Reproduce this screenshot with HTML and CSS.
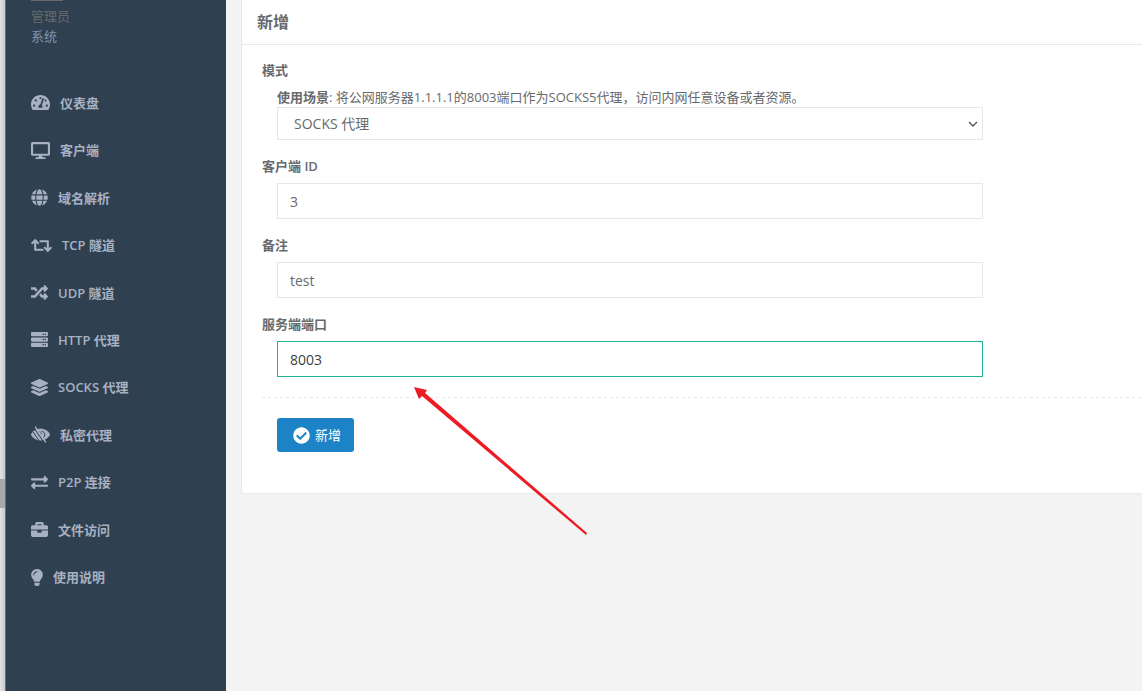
FILE: index.html
```html
<!DOCTYPE html>
<html lang="zh-CN">
<head>
<meta charset="utf-8">
<title>新增</title>
<link rel="stylesheet" href="styles.css">
</head>
<body>
<div class="layout">
  <div class="gutter"><div class="gutter-thumb"></div></div>
  <aside class="sidebar">
    <div class="profile">
      <span class="avatar-edge"></span>
      <span class="profile-name">管理员</span>
      <a class="profile-role" href="#">系统</a>
    </div>
    <nav class="menu">
      <a href="#"><svg viewBox="0 0 576 512" class="icon wide"><path d="M288 32C128.940 32 0 160.940 0 320c0 52.800 14.250 102.260 39.060 144.800 5.610 9.620 16.300 15.200 27.440 15.200h443c11.140 0 21.830-5.580 27.440-15.200C561.750 422.260 576 372.800 576 320c0-159.060-128.940-288-288-288zm0 64c14.710 0 26.580 10.130 30.320 23.650-1.110 2.260-2.640 4.230-3.450 6.670l-9.220 27.670c-5.130 3.490-10.970 6.010-17.640 6.010-17.670 0-32-14.330-32-32S270.330 96 288 96zM96 384c-17.670 0-32-14.330-32-32s14.330-32 32-32 32 14.330 32 32-14.330 32-32 32zm48-160c-17.670 0-32-14.330-32-32s14.330-32 32-32 32 14.330 32 32-14.330 32-32 32zm246.770-72.410l-61.330 184C343.130 347.330 352 364.540 352 384c0 11.720-3.380 22.550-8.880 32H232.880c-5.500-9.450-8.880-20.280-8.880-32 0-33.940 26.500-61.430 59.900-63.590l61.340-184.010c4.170-12.560 17.730-19.450 30.360-15.170 12.570 4.190 19.350 17.790 15.170 30.360zm14.660 57.200l15.520-46.550c3.470-1.290 7.130-2.230 11.050-2.230 17.670 0 32 14.330 32 32s-14.330 32-32 32c-11.380-.010-20.890-6.280-26.570-15.220zM480 384c-17.670 0-32-14.330-32-32s14.330-32 32-32 32 14.330 32 32-14.330 32-32 32z"/></svg>仪表盘</a>
      <a href="#"><svg viewBox="0 0 576 512" class="icon wide"><path d="M528 0H48C21.500 0 0 21.500 0 48v320c0 26.500 21.500 48 48 48h192l-16 48h-72c-13.300 0-24 10.700-24 24s10.700 24 24 24h272c13.300 0 24-10.700 24-24s-10.700-24-24-24h-72l-16-48h192c26.500 0 48-21.500 48-48V48c0-26.500-21.500-48-48-48zm-16 352H64V64h448v288z"/></svg>客户端</a>
      <a href="#"><svg viewBox="0 0 496 512" class="icon"><path d="M336.500 160C322 70.700 287.800 8 248 8s-74 62.700-88.500 152h177zM152 256c0 22.200 1.200 43.500 3.300 64h185.300c2.100-20.500 3.300-41.800 3.300-64s-1.200-43.500-3.300-64H155.300c-2.100 20.500-3.300 41.800-3.300 64zm324.700-96c-28.600-67.900-86.500-120.400-158-141.600 24.400 33.800 41.200 84.700 50 141.600h108zM177.200 18.400C105.800 39.600 47.800 92.100 19.300 160h108c8.700-56.900 25.500-107.800 49.900-141.600zM487.400 192H372.700c2.100 21 3.300 42.500 3.300 64s-1.200 43-3.300 64h114.600c5.500-20.500 8.600-41.800 8.600-64s-3.100-43.500-8.500-64zM120 256c0-21.500 1.200-43 3.300-64H8.600C3.200 212.500 0 233.800 0 256s3.200 43.500 8.600 64h114.600c-2-21-3.200-42.500-3.200-64zm39.500 96c14.500 89.300 48.700 152 88.500 152s74-62.700 88.500-152h-177zm159.300 141.600c71.400-21.200 129.400-73.700 158-141.600h-108c-8.800 56.900-25.600 107.800-50 141.600zM19.300 352c28.600 67.900 86.500 120.400 158 141.600-24.400-33.800-41.200-84.700-50-141.600h-108z"/></svg>域名解析</a>
      <a href="#"><svg viewBox="0 0 640 512" class="icon wider"><path d="M629.657 343.598L528.971 444.284c-9.373 9.372-24.568 9.372-33.941 0L394.343 343.598c-9.373-9.373-9.373-24.569 0-33.941l10.823-10.823c9.562-9.562 25.133-9.340 34.419.492L480 342.118V160H292.451a24.005 24.005 0 0 1-16.971-7.029l-16-16C244.361 121.851 255.069 96 276.451 96H520c13.255 0 24 10.745 24 24v222.118l40.416-42.792c9.285-9.831 24.856-10.054 34.419-.492l10.823 10.823c9.372 9.372 9.372 24.569-.001 33.941zm-265.138 15.431A23.999 23.999 0 0 0 347.548 352H160V169.881l40.416 42.792c9.286 9.831 24.856 10.054 34.419.491l10.822-10.822c9.373-9.373 9.373-24.569 0-33.941L144.971 67.716c-9.373-9.373-24.569-9.373-33.941 0L10.343 168.402c-9.373 9.373-9.373 24.569 0 33.941l10.822 10.822c9.562 9.562 25.133 9.340 34.419-.491L96 169.881V392c0 13.255 10.745 24 24 24h243.549c21.382 0 32.090-25.851 16.971-40.971l-16.001-16z"/></svg>TCP 隧道</a>
      <a href="#"><svg viewBox="0 0 512 512" class="icon"><path d="M504.971 359.029c9.373 9.373 9.373 24.569 0 33.941l-80 79.984c-15.010 15.010-40.971 4.490-40.971-16.971V416h-58.785a12.004 12.004 0 0 1-8.773-3.812l-70.556-75.596 53.333-57.143L352 336h32v-39.981c0-21.438 25.943-31.998 40.971-16.971l80 79.981zM12 176h84l52.781 56.551 53.333-57.143-70.556-75.596A11.999 11.999 0 0 0 122.785 96H12c-6.627 0-12 5.373-12 12v56c0 6.627 5.373 12 12 12zm372 0v39.984c0 21.460 25.961 31.980 40.971 16.971l80-79.984c9.373-9.373 9.373-24.569 0-33.941l-80-79.981C409.943 24.021 384 34.582 384 56.019V96h-58.785a12.004 12.004 0 0 0-8.773 3.812L96 336H12c-6.627 0-12 5.373-12 12v56c0 6.627 5.373 12 12 12h110.785c3.326 0 6.503-1.381 8.773-3.812L352 176h32z"/></svg>UDP 隧道</a>
      <a href="#"><svg viewBox="0 0 512 512" class="icon"><path fill-rule="evenodd" d="M32 32h448q32 0 32 32v64q0 32-32 32H32q-32 0-32-32V64q0-32 32-32zM32 192h448q32 0 32 32v64q0 32-32 32H32q-32 0-32-32v-64q0-32 32-32zM32 352h448q32 0 32 32v64q0 32-32 32H32q-32 0-32-32v-64q0-32 32-32zM344 96a24 24 0 1 0 48 0a24 24 0 1 0-48 0zm64 0a24 24 0 1 0 48 0a24 24 0 1 0-48 0zM344 256a24 24 0 1 0 48 0a24 24 0 1 0-48 0zm64 0a24 24 0 1 0 48 0a24 24 0 1 0-48 0zM344 416a24 24 0 1 0 48 0a24 24 0 1 0-48 0zm64 0a24 24 0 1 0 48 0a24 24 0 1 0-48 0z"/></svg>HTTP 代理</a>
      <a href="#"><svg viewBox="0 0 512 512" class="icon"><path d="M12.410 148.020l232.940 105.670c6.800 3.090 14.490 3.090 21.290 0l232.940-105.670c16.550-7.510 16.550-32.520 0-40.030L266.650 2.310a25.607 25.607 0 0 0-21.290 0L12.410 107.980c-16.550 7.510-16.550 32.530 0 40.040zm487.180 88.280l-58.090-26.330-161.640 73.270c-7.560 3.430-15.590 5.170-23.860 5.170s-16.290-1.740-23.860-5.170L70.510 209.970l-58.100 26.330c-16.550 7.500-16.550 32.500 0 40l232.940 105.590c6.800 3.080 14.490 3.080 21.290 0L499.590 276.300c16.550-7.500 16.550-32.500 0-40zm0 127.800l-57.870-26.230-161.860 73.370c-7.560 3.430-15.590 5.170-23.860 5.170s-16.290-1.740-23.860-5.170L70.290 337.870 12.410 364.100c-16.550 7.500-16.550 32.500 0 40l232.940 105.590c6.800 3.080 14.490 3.080 21.290 0L499.590 404.100c16.550-7.500 16.550-32.500 0-40z"/></svg>SOCKS 代理</a>
      <a href="#"><svg viewBox="0 0 576 512" class="icon wide"><path d="M7 232C63 136 168 72 288 72s225 64 281 160c9 16 9 32 0 48-56 96-161 160-281 160S63 376 7 280c-9-16-9-32 0-48z"/><path class="slash" d="M60 175l190 275M125 110l240 345"/><path class="slash" d="M330 150c100 40 110 150 45 205M270 160c-10 50 20 80 60 70"/><path class="strike" d="M136 30l304 452"/></svg>私密代理</a>
      <a href="#"><svg viewBox="0 0 512 512" class="icon"><path d="M0 168v-16c0-13.255 10.745-24 24-24h360V80c0-21.367 25.899-32.042 40.971-16.971l80 80c9.372 9.373 9.372 24.569 0 33.941l-80 80C409.956 271.982 384 261.456 384 240v-48H24c-13.255 0-24-10.745-24-24zm488 152H128v-48c0-21.314-25.862-32.080-40.971-16.971l-80 80c-9.372 9.373-9.372 24.569 0 33.941l80 80C102.057 463.997 128 453.437 128 432v-48h360c13.255 0 24-10.745 24-24v-16c0-13.255-10.745-24-24-24z"/></svg>P2P 连接</a>
      <a href="#"><svg viewBox="0 0 512 512" class="icon"><path d="M320 336c0 8.840-7.160 16-16 16h-96c-8.840 0-16-7.160-16-16v-48H0v144c0 25.600 22.400 48 48 48h416c25.600 0 48-22.400 48-48V288H320v48zm144-208h-80V80c0-25.600-22.400-48-48-48H176c-25.600 0-48 22.400-48 48v48H48c-25.600 0-48 22.400-48 48v80h512v-80c0-25.600-22.400-48-48-48zm-144 0H192V96h128v32z"/></svg>文件访问</a>
      <a href="#"><svg viewBox="0 0 352 512" class="icon narrow"><path d="M96.060 454.350c.010 6.290 1.870 12.450 5.360 17.690l17.090 25.690a31.990 31.990 0 0 0 26.640 14.280h61.710a31.990 31.990 0 0 0 26.640-14.280l17.090-25.690a31.989 31.989 0 0 0 5.360-17.690l.040-38.350H96.010l.050 38.350zM0 176c0 44.370 16.450 84.850 43.560 115.780 16.520 18.850 42.360 58.230 52.210 91.450.040.260.070.520.110.780h160.240c.040-.260.070-.510.110-.780 9.850-33.220 35.690-72.600 52.210-91.450C335.550 260.850 352 220.370 352 176 352 78.610 272.910-.300 175.450 0 73.440.310 0 82.970 0 176zm176-80c-44.110 0-80 35.890-80 80 0 8.840-7.160 16-16 16s-16-7.160-16-16c0-61.760 50.240-112 112-112 8.840 0 16 7.160 16 16s-7.160 16-16 16z"/></svg>使用说明</a>
    </nav>
  </aside>
  <main class="content">
    <section class="panel">
      <header class="panel-head"><h1>新增</h1></header>
      <form class="form">
        <div class="group">
          <label for="mode">模式</label>
          <div class="field">
            <p class="hint"><b>使用场景</b>: 将公网服务器1.1.1.1的8003端口作为SOCKS5代理，访问内网任意设备或者资源。</p>
            <div class="select-wrap">
              <select id="mode"><option>SOCKS 代理</option></select>
              <svg class="chevron" viewBox="0 0 10 6"><path d="M1 1l4 4 4-4"/></svg>
            </div>
          </div>
        </div>
        <div class="group">
          <label for="client">客户端 ID</label>
          <div class="field"><input id="client" type="text" value="3"></div>
        </div>
        <div class="group">
          <label for="remark">备注</label>
          <div class="field"><input id="remark" type="text" value="test"></div>
        </div>
        <div class="group">
          <label for="port">服务端端口</label>
          <div class="field"><input id="port" class="active" type="text" value="8003"></div>
        </div>
        <div class="divider"></div>
        <div class="field">
          <button type="button"><svg viewBox="0 0 512 512" class="icon"><path d="M504 256c0 136.967-111.033 248-248 248S8 392.967 8 256 119.033 8 256 8s248 111.033 248 248zM227.314 387.314l184-184c6.248-6.248 6.248-16.379 0-22.627l-22.627-22.627c-6.248-6.249-16.379-6.249-22.628 0L216 308.118l-70.059-70.059c-6.248-6.248-16.379-6.248-22.628 0l-22.627 22.627c-6.248 6.248-6.248 16.379 0 22.627l104 104c6.249 6.249 16.379 6.249 22.628.001z"/></svg>新增</button>
        </div>
      </form>
      <svg class="arrow" viewBox="0 0 174 149"><path d="M0 0L13 3 11 6 173 146 172 148 8 9 5 12z"/></svg>
    </section>
  </main>
</div>
</body>
</html>
```

FILE: styles.css
```css
* { box-sizing: border-box; }
body {
  margin: 0;
  background: #f3f3f4;
  color: #676a6c;
  font: 13px/20px "Open Sans", "Noto Sans CJK SC", sans-serif;
}
.layout { display: flex; min-height: 100vh; }
.gutter {
  width: 6px;
  padding-top: 479px;
  border-right: 1px solid #6b6f73;
  background: linear-gradient(90deg, #e2e2e2, #cacaca);
}
.gutter-thumb { height: 29px; background: #a8a8a8; }
.sidebar { width: 220px; background: #2f4050; }
.profile { display: flex; flex-direction: column; height: 79px; padding-left: 25px; }
.avatar-edge { width: 32px; height: 1px; margin-bottom: 6px; background: #676a6c; }
.profile-name { line-height: 19px; }
.profile-role { color: #8095a8; text-decoration: none; }
.menu { display: grid; grid-auto-rows: 1fr; height: 522px; }
.menu a {
  display: flex;
  align-items: center;
  gap: 10px;
  padding-left: 25px;
  color: #a7b1c2;
  font-weight: 600;
  text-decoration: none;
}
.icon { width: 17px; height: 17px; fill: currentColor; }
.wide { width: 19px; }
.wider { width: 21px; }
.narrow { width: 12px; }
.slash { fill: none; stroke: #2f4050; stroke-width: 30px; }
.strike { fill: none; stroke: currentColor; stroke-width: 44px; stroke-linecap: round; }
.content { flex: 1; min-width: 0; padding-left: 15px; }
.panel {
  position: relative;
  border: solid #e7eaec;
  border-width: 0 0 1px 1px;
  background: #fff;
}
.panel-head { padding: 12px 15px; border-bottom: 1px solid #e7eaec; }
h1 { margin: 0; font-size: 16px; line-height: 20px; font-weight: 600; }
.form { padding: 15px 0 41px 20px; }
.group { margin-bottom: 16px; }
.group label { display: block; margin-bottom: 7px; font-weight: 600; }
.field { padding: 0 159px 0 15px; }
.hint { margin: 0; white-space: nowrap; }
.select-wrap { position: relative; }
select, input {
  display: block;
  width: 100%;
  height: 36px;
  padding: 0 12px;
  border: 1px solid #e5e6e7;
  border-radius: 0;
  background: #fff;
  color: #676a6c;
  font: inherit;
  font-size: 14px;
}
select { height: 33px; padding: 0 16px; appearance: none; }
.chevron {
  position: absolute;
  right: 5px;
  top: 14px;
  width: 10px;
  height: 6px;
  fill: none;
  stroke: #555;
  stroke-width: 1.4;
  pointer-events: none;
}
.active { border-color: #1ab394; color: #3c3f41; }
.divider {
  height: 1px;
  margin: 20px 0;
  background: repeating-linear-gradient(90deg, #e7eaec 0 3px, #fff 3px 6px);
}
button {
  display: flex;
  align-items: center;
  gap: 5px;
  height: 34px;
  padding: 0 13px 0 16px;
  border: 0;
  border-radius: 3px;
  background: #1c84c6;
  color: #fff;
  font: inherit;
}
.arrow {
  position: absolute;
  left: 172px;
  top: 387px;
  width: 174px;
  height: 149px;
  fill: #ed1c24;
  pointer-events: none;
}
```
